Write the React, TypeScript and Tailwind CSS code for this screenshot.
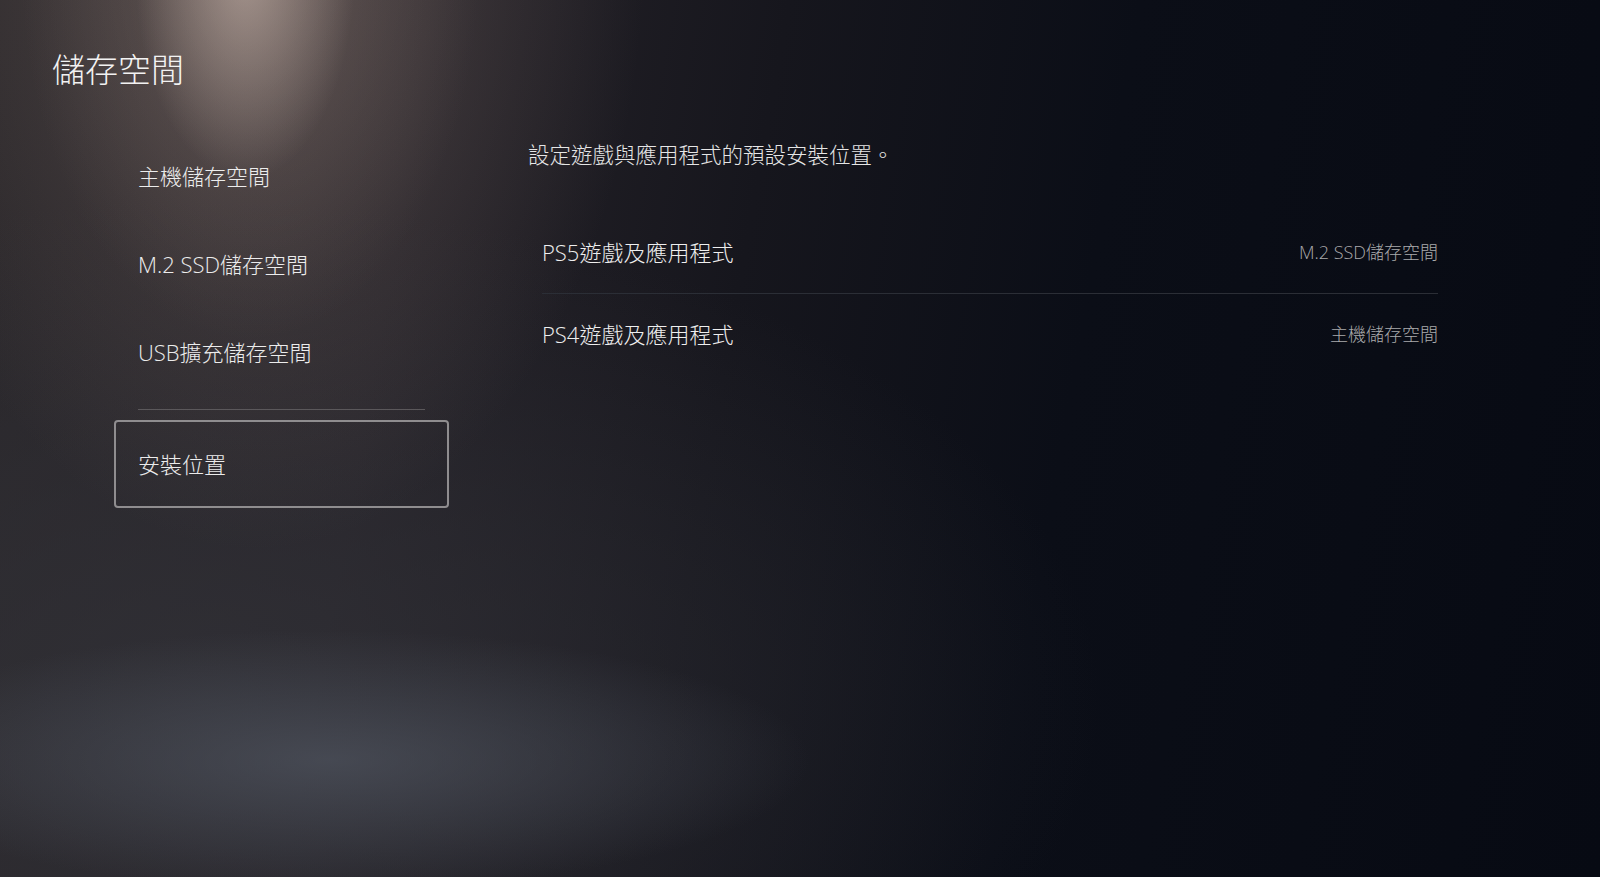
import React from 'react';

const font = "font-['Open_Sans','Noto_Sans_CJK_TC',sans-serif]";

// 左側選單
function MenuItem({ label, selected }: { label: string; selected?: boolean }) {
  return (
    <div
      className={`flex h-[88px] items-center rounded-[4px] border-2 px-[22px] text-[22px] font-light leading-none text-[#ececec] ${
        selected ? 'border-[#8f8d8f]' : 'border-transparent'
      }`}
    >
      {label}
    </div>
  );
}

// 右側設定列
function SettingRow({ label, value, first }: { label: string; value: string; first?: boolean }) {
  return (
    <div
      className={`flex items-center justify-between ${
        first ? 'h-[84px] border-b border-[#2b2e36]' : 'h-[80px]'
      }`}
    >
      <span className="text-[22px] font-light leading-none text-[#efefef]">{label}</span>
      <span className="text-[18px] font-light leading-none text-[#aaaaac]">{value}</span>
    </div>
  );
}

export default function App() {
  return (
    <div
      className={`${font} h-[877px] w-full overflow-hidden bg-[radial-gradient(ellipse_110px_210px_at_245px_-30px,rgba(205,186,176,0.6),rgba(205,186,176,0)_100%),radial-gradient(ellipse_230px_380px_at_250px_-40px,rgba(150,130,122,0.35),rgba(150,130,122,0)_100%),radial-gradient(ellipse_390px_600px_at_255px_-50px,rgba(120,104,99,0.5),rgba(120,104,99,0)_100%),radial-gradient(ellipse_480px_130px_at_330px_760px,rgba(86,92,104,0.6),rgba(86,92,104,0)_100%),radial-gradient(ellipse_900px_500px_at_200px_700px,rgba(50,50,56,0.8),rgba(50,50,56,0)_100%),linear-gradient(100deg,#2a272a_0%,#252228_25%,#16161d_45%,#0b0e17_65%,#070a13_100%)]`}
    >
      <h1 className="pl-[52px] pt-[50px] text-[33px] font-light leading-[40px] text-[#f2f2f2]">儲存空間</h1>

      <div className="mt-[42px] flex">
        <nav className="ml-[114px] w-[335px]">
          <MenuItem label="主機儲存空間" />
          <MenuItem label="M.2 SSD儲存空間" />
          <MenuItem label="USB擴充儲存空間" />
          <div className="mx-[24px] mb-[10px] mt-[13px] h-px bg-[#5b585b]" />
          <MenuItem label="安裝位置" selected />
        </nav>

        <section className="ml-[79px] w-[910px] pt-[8px]">
          <p className="text-[21.5px] font-light leading-[30px] text-[#e6e6e6]">設定遊戲與應用程式的預設安裝位置。</p>
          <div className="ml-[14px] mt-[40px] w-[896px]">
            <SettingRow label="PS5遊戲及應用程式" value="M.2 SSD儲存空間" first />
            <SettingRow label="PS4遊戲及應用程式" value="主機儲存空間" />
          </div>
        </section>
      </div>
    </div>
  );
}
